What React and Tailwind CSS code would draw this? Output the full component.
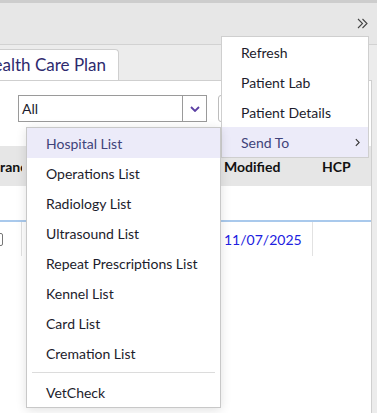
import React from 'react'

const subItems = [
    'Hospital List',
    'Operations List',
    'Radiology List',
    'Ultrasound List',
    'Repeat Prescriptions List',
    'Kennel List',
    'Card List',
    'Cremation List',
]

function Chevron({ className }) {
    return (
        <svg viewBox="0 0 10 6" className={className} fill="none" stroke="currentColor" strokeWidth="1.8">
            <path d="M1 1l4 4 4-4" />
        </svg>
    )
}

export default function App() {
    return (
        <div className="relative w-[377px] h-[413px] overflow-hidden bg-[#ececec] font-['Lato',sans-serif] text-[#1c1c2c]">
            {/* top bar */}
            <div className="h-[3px] bg-[#cdcdcd]" />
            <div className="h-[42px] bg-[#e7e7e7] border-b border-[#d2d2d2] flex items-center justify-end pr-[9px]">
                <svg viewBox="0 0 11 11" className="w-[11px] h-[11px] text-[#444]" fill="none" stroke="currentColor" strokeWidth="1.1">
                    <path d="M1 1l4.5 4.5L1 10M5.5 1l4.5 4.5-4.5 4.5" />
                </svg>
            </div>

            {/* tab row */}
            <div className="pt-[4px] flex">
                <div className="-ml-[30px] w-[149px] h-[31px] bg-white border border-b-0 border-[#cfcfcf] rounded-tr-[4px] flex items-center justify-end pr-[12px]">
                    <span className="text-[17px] text-[#2e2a6e] whitespace-nowrap">Health Care Plan</span>
                </div>
            </div>

            {/* panel */}
            <div className="w-[372px] h-[400px] bg-white border-t border-r border-[#cfcfcf]">
                <div className="pt-[14px] pl-[18px] flex gap-[11px]">
                    <div className="w-[189px] h-[27px] border border-[#9a9a9a] flex">
                        <div className="flex-1 flex items-center pl-[3px] text-[14px]">All</div>
                        <div className="w-[24px] border-l border-[#9a9a9a] flex items-center justify-center">
                            <Chevron className="w-[10px] h-[6px] text-[#5b3fa3]" />
                        </div>
                    </div>
                    <div className="w-[80px] h-[27px] border border-[#bdbdbd] rounded-[3px]" />
                </div>

                {/* table */}
                <div className="mt-[24px]">
                    <div className="h-[40px] bg-[#e6e6e6] flex items-center text-[14px] font-bold text-[#111]">
                        <div className="w-[22px] overflow-hidden whitespace-nowrap">
                            <span className="-ml-[9px] inline-block">Branch</span>
                        </div>
                        <div className="w-[202px]" />
                        <div className="w-[98px]">Modified</div>
                        <div>HCP</div>
                    </div>
                    <div className="h-[34px]" />
                    <div className="h-[2px] bg-[#a9c9ec]" />
                    <div className="h-[34px] flex">
                        <div className="w-[22px] border-r border-[#e2e2e2] flex items-center">
                            <div className="-ml-[8px] w-[11px] h-[13px] border border-[#777] rounded-[2px]" />
                        </div>
                        <div className="w-[201px]" />
                        <div className="w-[90px] border-r border-[#e2e2e2] flex items-center pl-[1px] text-[14px] text-[#2020e0]">11/07/2025</div>
                        <div className="w-[58px]" />
                    </div>
                </div>
            </div>

            {/* main context menu */}
            <div className="absolute left-[221px] top-[36px] w-[148px] bg-white border border-[#cfcfcf] text-[14px]">
                {['Refresh', 'Patient Lab', 'Patient Details'].map(t => (
                    <div key={t} className="h-[30px] flex items-center pl-[19px]">{t}</div>
                ))}
                <div className="h-[30px] flex items-center justify-between pl-[19px] pr-[8px] bg-[#ecebf9] text-[#40437a]">
                    <span>Send To</span>
                    <svg viewBox="0 0 6 10" className="w-[5px] h-[9px] text-[#333]" fill="none" stroke="currentColor" strokeWidth="1.3">
                        <path d="M1 1l4 4-4 4" />
                    </svg>
                </div>
            </div>

            {/* submenu */}
            <div className="absolute left-[26px] top-[127px] w-[195px] bg-white border border-[#c8c8c8] shadow-[0_2px_10px_rgba(0,0,0,0.12)] text-[14px]">
                {subItems.map((t, i) => (
                    <div
                        key={t}
                        className={i === 0
                            ? 'h-[30px] flex items-center pl-[19px] bg-[#ecebf9] text-[#40437a]'
                            : 'h-[30px] flex items-center pl-[19px]'}
                    >
                        {t}
                    </div>
                ))}
                <div className="mx-[5px] my-[4px] h-px bg-[#dcdcdc]" />
                <div className="h-[30px] flex items-center pl-[19px]">VetCheck</div>
            </div>
        </div>
    )
}
